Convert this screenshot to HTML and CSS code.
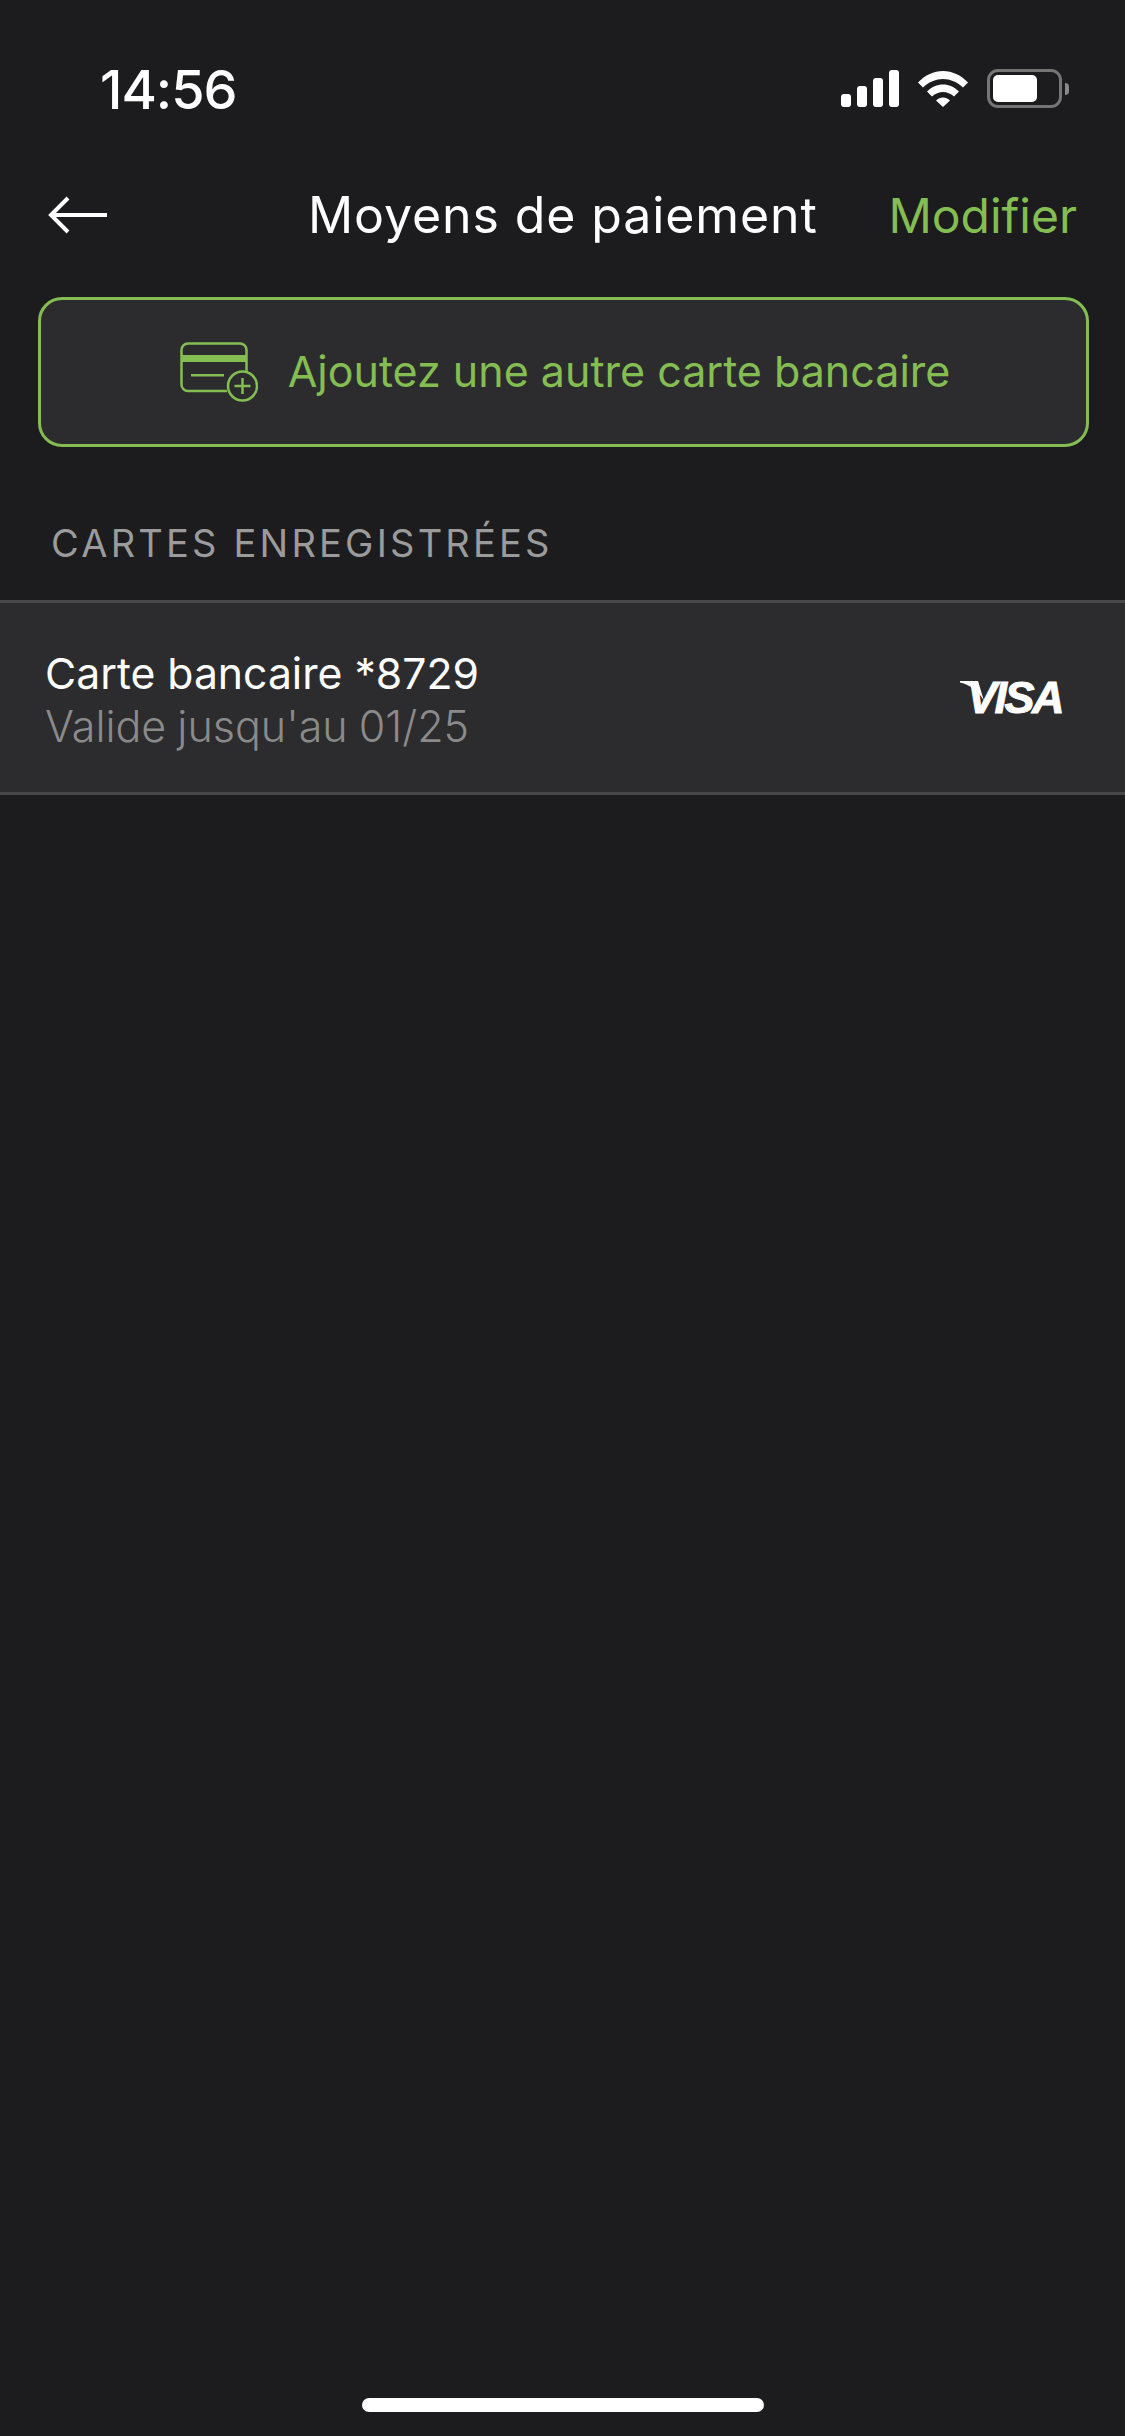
FILE: index.html
```html
<!DOCTYPE html>
<html lang="fr">
    <head>
        <title>Moyens de paiement</title>
        <link rel="stylesheet" href="styles.css">
    </head>
    <body>
        <div class="statusbar">
            <span class="time">14:56</span>
            <div class="status-icons">
                <svg class="signal" width="58" height="37" viewBox="0 0 58 37">
                    <rect x="0" y="24" width="10" height="13" rx="3"/>
                    <rect x="16" y="16" width="10" height="21" rx="3"/>
                    <rect x="32" y="8" width="10" height="29" rx="3"/>
                    <rect x="48" y="0" width="10" height="37" rx="3"/>
                </svg>
                <svg class="wifi" width="50" height="37" viewBox="0 0 50 37">
                    <path d="M0 12.500 C14 -3 36 -3 50 12.500 L45 17.500 C33 6 17 6 5 17.500 Z"/>
                    <path d="M9 21.500 C18 12 32 12 41 21.500 L36 26.500 C29.500 20.500 20.500 20.500 14 26.500 Z"/>
                    <path d="M18 30.500 C22 26.500 28 26.500 32 30.500 L25 37 Z"/>
                </svg>
                <div class="battery">
                    <div class="battery-level"></div>
                </div>
                <div class="battery-cap"></div>
            </div>
        </div>

        <div class="navbar">
            <svg class="back" width="60" height="38" viewBox="0 0 60 38">
                <path d="M59 19H3M20 2L3 19L20 36" fill="none" stroke="#fff" stroke-width="4"/>
            </svg>
            <h1>Moyens de paiement</h1>
            <a class="edit">Modifier</a>
        </div>

        <div class="add-card">
            <svg class="card-icon" width="78" height="60" viewBox="0 0 78 60">
                <path d="M47 49H8a6.500 6.500 0 0 1-6.500-6.500V8A6.500 6.500 0 0 1 8 1.500h52A6.500 6.500 0 0 1 66.500 8v22" fill="none" stroke="#84bd52" stroke-width="2.500"/>
                <rect x="1.500" y="13" width="65" height="7" fill="#84bd52"/>
                <rect x="11" y="32" width="33" height="2.500" fill="#84bd52"/>
                <circle cx="62.500" cy="44" r="14.500" fill="none" stroke="#84bd52" stroke-width="2.500"/>
                <path d="M62.500 36V52M54.500 44H70.500" fill="none" stroke="#84bd52" stroke-width="2.500"/>
            </svg>
            <span>Ajoutez une autre carte bancaire</span>
        </div>

        <h2>CARTES ENREGISTRÉES</h2>

        <div class="card-row">
            <div class="card-text">
                <div class="card-name">Carte bancaire *8729</div>
                <div class="card-expiry">Valide jusqu'au 01/25</div>
            </div>
            <div class="visa">
                <svg class="visa-tick" width="24" height="20" viewBox="0 0 24 20">
                    <path d="M0 0H18L24 20C19 10 10 4 0 1.500Z"/>
                </svg>
                <span>VISA</span>
            </div>
        </div>

        <div class="home-indicator"></div>
    </body>
</html>
```

FILE: styles.css
```css
html, body {
    margin: 0;
    padding: 0;
}
body {
    display: flex;
    flex-direction: column;
    width: 1125px;
    height: 2436px;
    background: #1c1c1e;
    color: #fff;
    font-family: Inter, "Noto Sans", sans-serif;
    overflow: hidden;
}
.statusbar {
    display: flex;
    justify-content: space-between;
    align-items: center;
    height: 39px;
    padding: 69px 56px 0 100px;
}
.time {
    padding-top: 2px;
    font-size: 54px;
    font-weight: 500;
    line-height: 39px;
    letter-spacing: -1px;
}
.status-icons {
    display: flex;
    align-items: center;
}
.signal, .wifi {
    fill: #fff;
}
.wifi {
    margin-left: 19px;
}
.battery {
    box-sizing: border-box;
    width: 75px;
    height: 39px;
    margin-left: 19px;
    padding: 3px;
    border: 3px solid #757575;
    border-radius: 11px;
}
.battery-level {
    width: 44px;
    height: 27px;
    background: #fff;
    border-radius: 5px;
}
.battery-cap {
    width: 4px;
    height: 12px;
    margin-left: 3px;
    background: #8a8a8a;
    border-radius: 0 6px 6px 0;
}
.navbar {
    display: flex;
    align-items: center;
    height: 60px;
    margin-top: 77px;
    padding: 0 48px;
}
.back {
    flex: none;
}
h1 {
    margin: 0 0 0 200px;
    font-size: 50px;
    font-weight: 400;
    letter-spacing: 0.9px;
    white-space: nowrap;
}
.edit {
    margin-left: auto;
    color: #84bd52;
    font-size: 48px;
    font-weight: 400;
}
.add-card {
    box-sizing: border-box;
    display: flex;
    align-items: center;
    justify-content: center;
    gap: 30px;
    height: 150px;
    margin: 52px 36px 0 38px;
    padding-left: 3px;
    background: #2c2c2e;
    border: 3px solid #84bd52;
    border-radius: 24px;
    color: #84bd52;
    font-size: 43px;
    line-height: 48px;
}
.add-card span {
    padding-bottom: 3px;
}
h2 {
    margin: 75px 0 0 51px;
    color: #9b9b9b;
    font-size: 38px;
    font-weight: 400;
    letter-spacing: 3.2px;
    line-height: 42px;
}
.card-row {
    box-sizing: border-box;
    display: flex;
    align-items: center;
    justify-content: space-between;
    height: 195px;
    margin-top: 36px;
    padding: 0 63px 0 45px;
    background: #2c2c2e;
    border-top: 3px solid #48484a;
    border-bottom: 3px solid #48484a;
}
.card-text {
    padding-top: 4px;
}
.card-name {
    font-size: 42.700px;
    line-height: 53px;
}
.card-expiry {
    color: #8a8a8a;
    font-size: 43px;
    font-weight: 300;
    line-height: 53px;
    word-spacing: -1px;
}
.visa {
    display: flex;
    align-items: flex-start;
    color: #fff;
    font-family: "Liberation Sans", sans-serif;
    font-size: 45px;
    font-style: italic;
    font-weight: 700;
    letter-spacing: -2.500px;
    line-height: 34px;
    -webkit-text-stroke: 1px #fff;
}
.visa-tick {
    margin-right: -17px;
    fill: #fff;
}
.home-indicator {
    width: 402px;
    height: 14px;
    margin: auto auto 24px;
    background: #fff;
    border-radius: 7px;
}
```
